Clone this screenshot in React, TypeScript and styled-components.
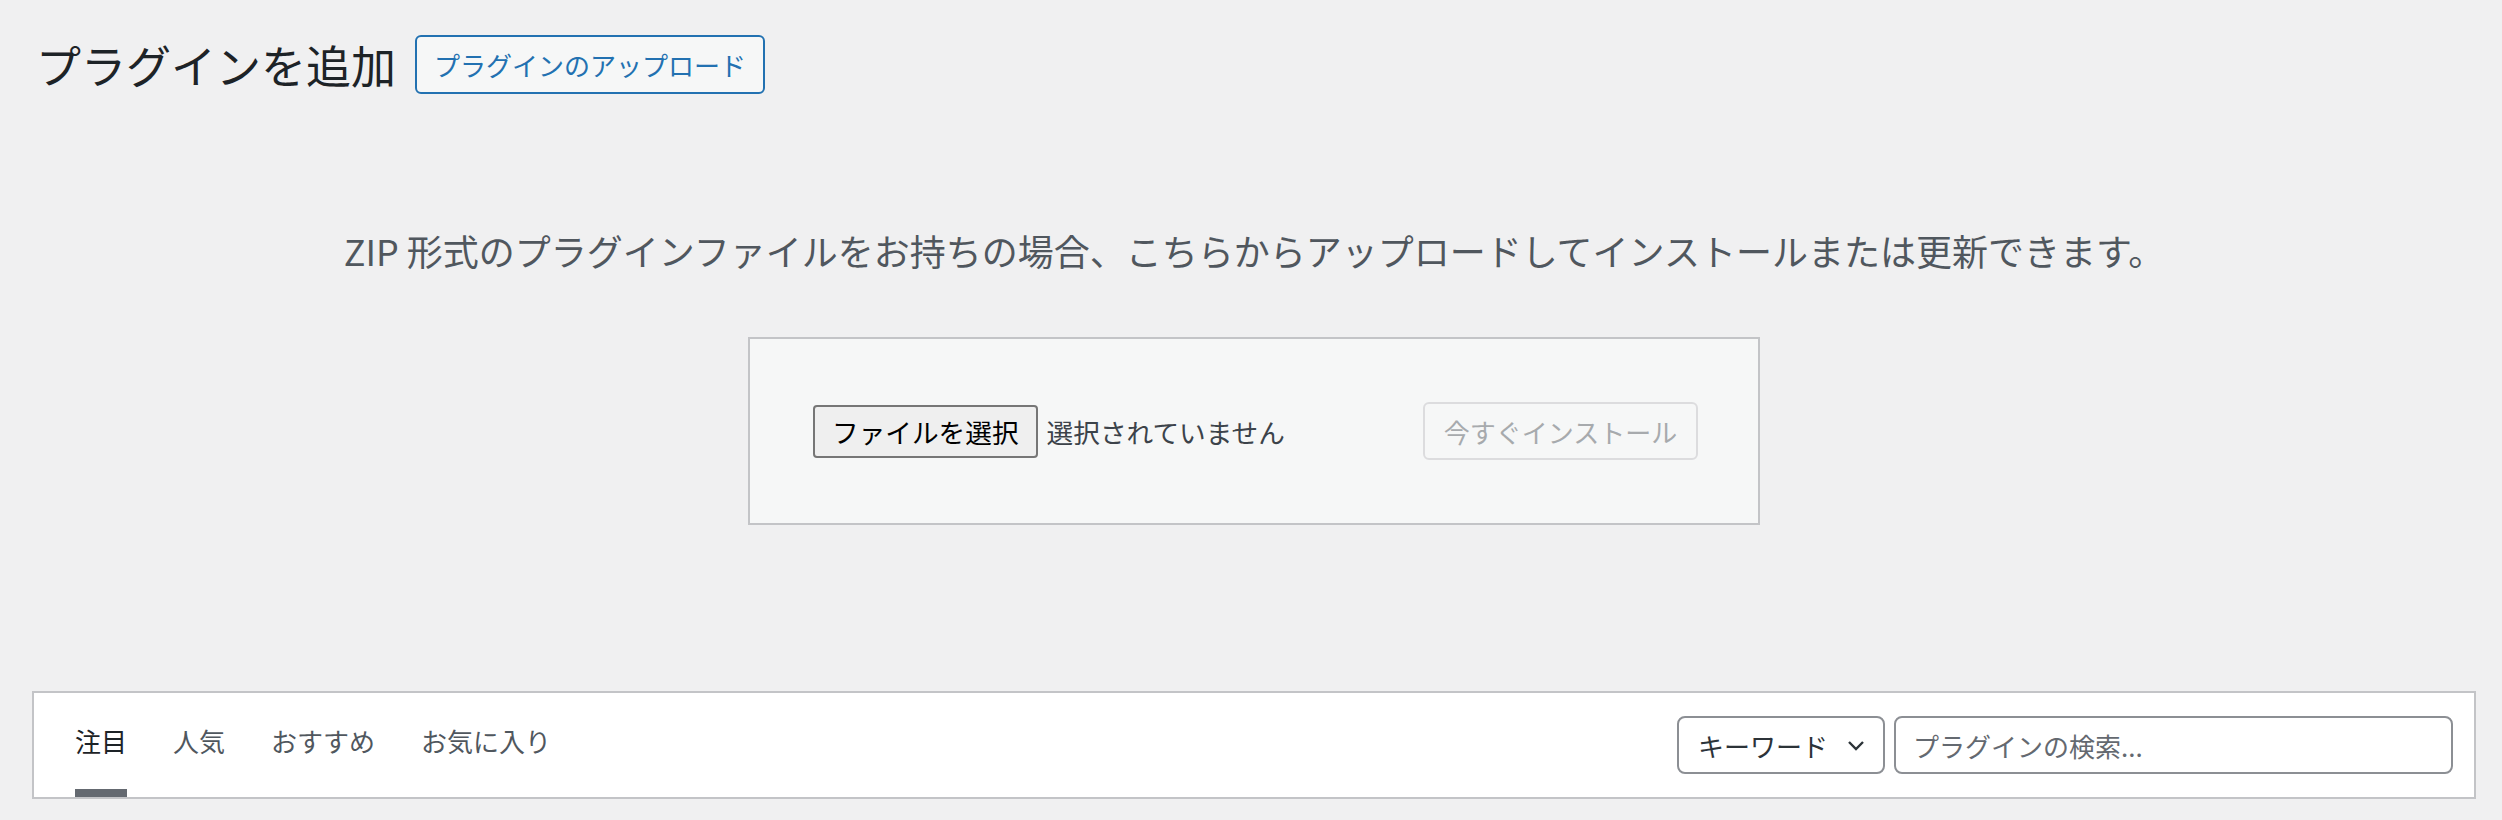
import styled, { createGlobalStyle } from 'styled-components'

const GlobalStyle = createGlobalStyle`
    html, body {
        margin: 0;
        padding: 0;
        background-color: #f0f0f1;
        font-family: "Noto Sans CJK JP", "Noto Sans", sans-serif;
        color: #3c434a;
    }
    * {
        box-sizing: border-box;
    }
`

const Wrap = styled.div`
    width: 2502px;
    height: 820px;
    overflow: hidden;
    padding: 35px 26px 0 32px;
`

const Header = styled.div`
    display: flex;
    align-items: center;
    gap: 19px;
    padding-left: 4px;
    height: 59px;
`

const Title = styled.h1`
    margin: 0;
    font-size: 45px;
    font-weight: 400;
    line-height: 59px;
    color: #1d2327;
`

const TitleAction = styled.a`
    display: inline-flex;
    align-items: center;
    height: 59px;
    padding: 0 17px;
    border: 2px solid #2271b1;
    border-radius: 6px;
    background-color: #f6f7f7;
    color: #2271b1;
    font-size: 26px;
    text-decoration: none;
    cursor: pointer;
`

const Help = styled.p`
    margin: 129px 0 60px;
    text-align: center;
    font-size: 36px;
    line-height: 54px;
    color: #50575e;
`

const UploadForm = styled.form`
    width: 1012px;
    height: 188px;
    margin: 0 auto;
    padding: 60px 60px 60px 63px;
    border: 2px solid #c3c4c7;
    background-color: #f6f7f7;

    display: flex;
    justify-content: space-between;
    align-items: center;
`

const FilePicker = styled.div`
    display: flex;
    align-items: center;
    gap: 9px;
`

const FileButton = styled.button`
    height: 53px;
    padding: 0 17px;
    border: 2px solid #767676;
    border-radius: 4px;
    background-color: #efefef;
    color: #000;
    font-family: inherit;
    font-size: 26.67px;
`

const FileName = styled.span`
    font-size: 26.67px;
    color: #3c434a;
`

const InstallButton = styled.button`
    width: 275px;
    height: 58px;
    border: 2px solid #dcdcde;
    border-radius: 6px;
    background-color: #f6f7f7;
    color: #a7aaad;
    font-family: inherit;
    font-size: 26px;
`

const FilterBar = styled.div`
    margin-top: 166px;
    height: 108px;
    border: 2px solid #c3c4c7;
    background-color: #fff;
    padding: 0 21px 0 41px;

    display: flex;
    justify-content: space-between;
    align-items: center;
`

const FilterLinks = styled.ul`
    margin: 0;
    padding: 0;
    list-style: none;
    display: flex;
    gap: 46px;
    align-self: stretch;
`

const FilterLink = styled.li<{ $active?: boolean }>`
    padding: 32px 0 32px;
    line-height: 32px;
    font-size: 26px;
    color: ${(props) => (props.$active ? '#1d2327' : '#50575e')};
    border-bottom: 8px solid ${(props) => (props.$active ? '#646970' : 'transparent')};
`

const SearchForm = styled.div`
    display: flex;
    align-items: center;
    gap: 9px;
`

const TypeSelect = styled.div`
    width: 208px;
    height: 58px;
    padding: 0 18px 0 19px;
    border: 2px solid #8c8f94;
    border-radius: 8px;
    background-color: #fff;
    color: #2c3338;
    font-size: 26px;

    display: flex;
    justify-content: space-between;
    align-items: center;

    svg {
        width: 18px;
        height: 11px;
    }
`

const SearchInput = styled.input`
    width: 559px;
    height: 58px;
    padding: 0 17px;
    border: 2px solid #8c8f94;
    border-radius: 8px;
    background-color: #fff;
    font-family: inherit;
    font-size: 26px;
    color: #2c3338;
    outline: none;

    &::placeholder {
        color: #646970;
    }
`

const tabs = ['注目', '人気', 'おすすめ', 'お気に入り']

export default function App() {
    return (
        <>
            <GlobalStyle />
            <Wrap>
                <Header>
                    <Title>プラグインを追加</Title>
                    <TitleAction>プラグインのアップロード</TitleAction>
                </Header>

                <Help>ZIP 形式のプラグインファイルをお持ちの場合、こちらからアップロードしてインストールまたは更新できます。</Help>

                <UploadForm onSubmit={(e) => e.preventDefault()}>
                    <FilePicker>
                        <FileButton type="button">ファイルを選択</FileButton>
                        <FileName>選択されていません</FileName>
                    </FilePicker>
                    <InstallButton type="submit" disabled>
                        今すぐインストール
                    </InstallButton>
                </UploadForm>

                <FilterBar>
                    <FilterLinks>
                        {tabs.map((t, i) => (
                            <FilterLink key={t} $active={i === 0}>
                                {t}
                            </FilterLink>
                        ))}
                    </FilterLinks>
                    <SearchForm>
                        <TypeSelect>
                            <span>キーワード</span>
                            <svg viewBox="0 0 18 11" fill="none">
                                <path d="M2 2l7 7 7-7" stroke="#2c3338" strokeWidth="2.4" />
                            </svg>
                        </TypeSelect>
                        <SearchInput placeholder="プラグインの検索..." />
                    </SearchForm>
                </FilterBar>
            </Wrap>
        </>
    )
}
